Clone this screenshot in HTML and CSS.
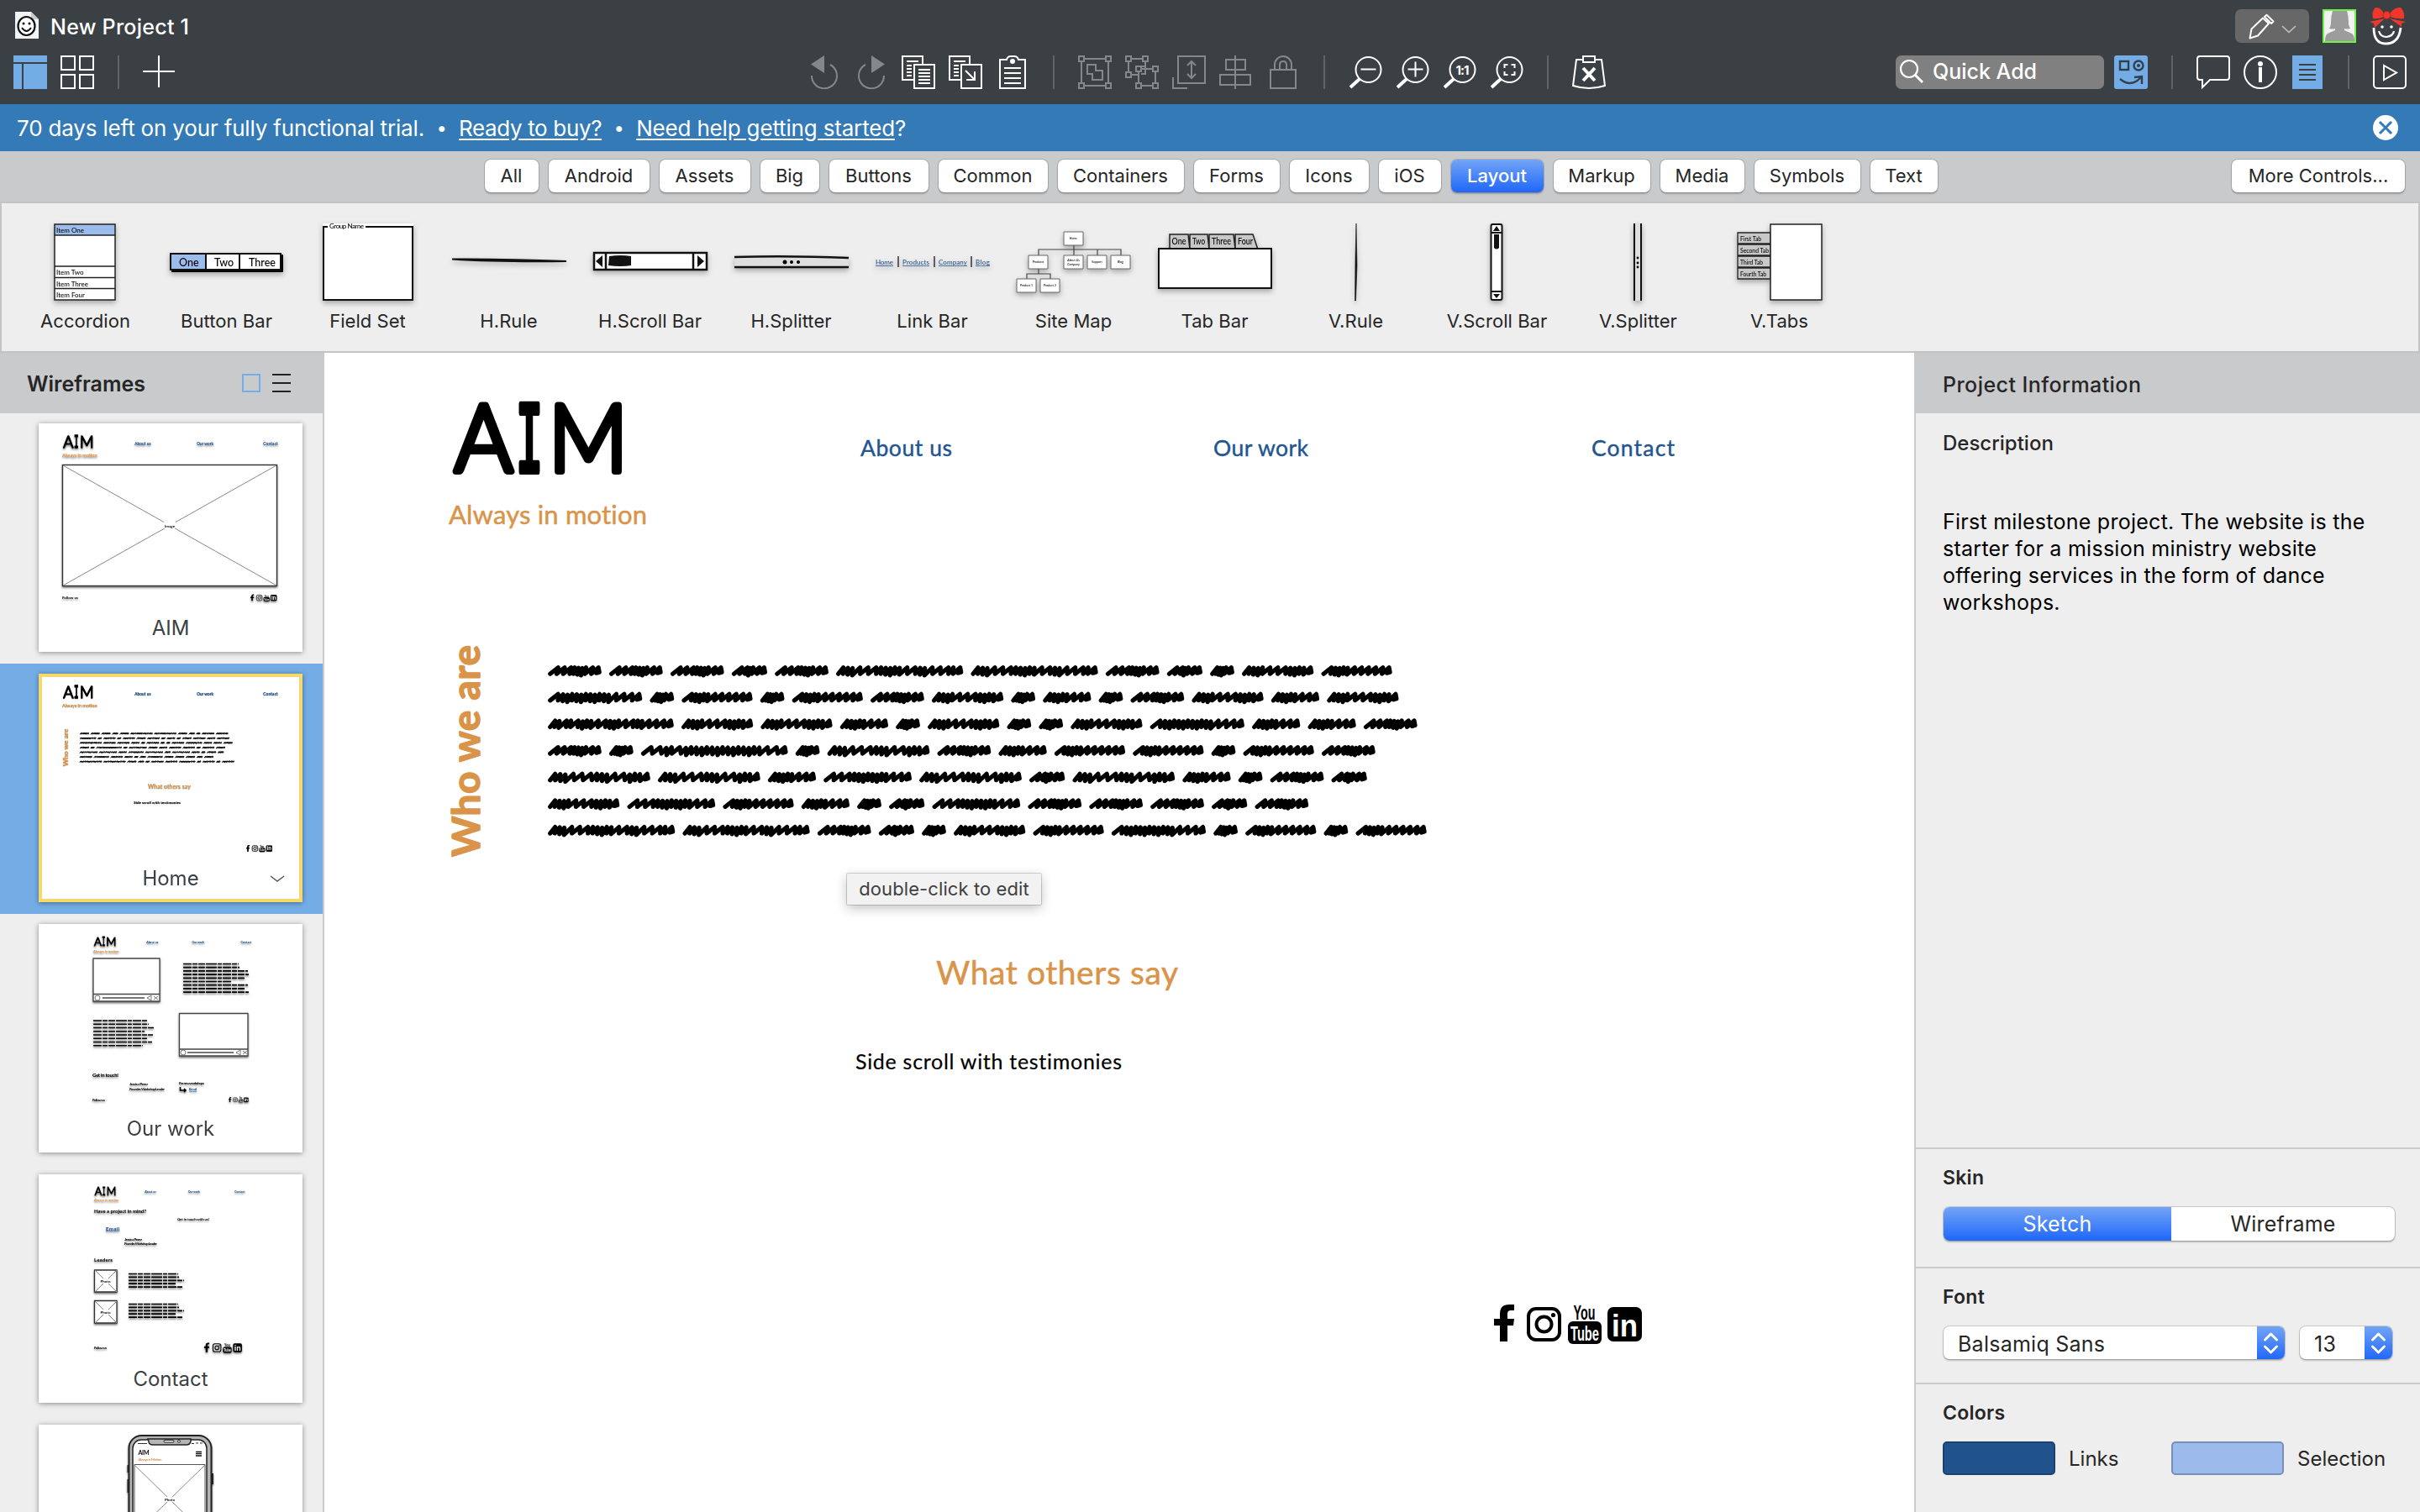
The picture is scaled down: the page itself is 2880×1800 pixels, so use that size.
FILE: index.html
```html
<!DOCTYPE html>
<html lang="en">
<head>
<meta charset="utf-8">
<title>New Project 1</title>
<link rel="stylesheet" href="styles.css">
</head>
<body>
<div class="app">

<header class="header">
  <div class="title-row">
    <svg class="doc-icon" width="28" height="32" viewBox="0 0 28 32"><path d="M0 0H19L28 9V32H0Z" fill="#f4f4f4"/><path d="M19 0V9H28Z" fill="#c9c9c9"/><ellipse cx="13.5" cy="17" rx="10" ry="11" fill="#fff" stroke="#111" stroke-width="2.2"/><circle cx="10" cy="14" r="1.5"/><circle cx="17" cy="14" r="1.5"/><path d="M8 19Q13.500 27 19 19" fill="none" stroke="#111" stroke-width="2"/></svg>
    <span class="project-name">New Project 1</span>
    <div class="account">
      <div class="mode-button">
        <svg width="88" height="40" viewBox="0 0 88 40" fill="none" stroke="#fff" stroke-width="2"><path d="M17.500 34.500L19.500 23.500L33 10.500L40 17L27 31.500Z M35 9L37.500 6.800L45.500 14.500L43 17Z" stroke-linejoin="round"/><path d="M56 20L64 27.500L72 20" stroke="#c4c4c4" stroke-width="1.500"/></svg>
      </div>
      <svg class="avatar" width="40" height="40" viewBox="0 0 40 40"><rect x="1" y="1" width="38" height="38" fill="#f1f1f1"/><path d="M12 2H29Q31 8 31 18Q32 21 33 23Q29 24 26 23V25L35 29Q38 31 38 38H3Q3 31 6 29L15 25V23Q12 24 8 23Q10 20 10 16Q10 8 12 2Z" fill="#9c9c9c"/><rect x="1" y="1" width="38" height="38" fill="none" stroke="#6ff24b" stroke-width="2"/></svg>
      <svg class="bow" width="44" height="46" viewBox="0 0 44 46"><path d="M5 25Q5 44 19 44Q35 44 37 25" fill="none" stroke="#fff" stroke-width="2.800"/><path d="M11 29Q13 36 20 36Q28 35 29 29" fill="none" stroke="#fff" stroke-width="2.200"/><circle cx="15" cy="24" r="1.800" fill="#fff"/><circle cx="26" cy="24" r="1.800" fill="#fff"/><path d="M17 8Q13 0 7 1Q2 6 4 14Q10 15 17 12ZM24 8Q30 0 37 1Q42 6 41 14Q34 15 24 12ZM18 14L0 18L5 20L6 25ZM24 14L43 18L38 20L38 24Z" fill="#f0372c"/><circle cx="20.500" cy="10" r="4.500" fill="#f0372c" stroke="#b3241c"/></svg>
    </div>
  </div>
  <div class="toolbar">
    <div class="tools">
      <svg class="icon" viewBox="0 0 40 40"><path d="M0 0H40V8H0ZM0 10H10V40H0ZM12 10H40V40H12Z" fill="#74ade6"/></svg>
      <svg class="icon line" viewBox="0 0 40 40"><path d="M1 1H17V17H1ZM23 1H39V17H23ZM1 23H17V39H1ZM23 23H39V39H23Z"/></svg>
      <i class="sep"></i>
      <svg class="icon line" viewBox="0 0 40 40"><path d="M19 0V38M0 19H38"/></svg>
    </div>
    <div class="tools center">
      <svg class="icon dim" viewBox="0 0 40 40"><path d="M4 10.500L20 0V21Z" class="solid"/><path d="M27 11A15 15 0 1 1 5 24"/></svg>
      <svg class="icon dim" viewBox="0 0 40 40"><path d="M36 10.500L20 0V21Z" class="solid"/><path d="M13 11A15 15 0 1 0 35 24"/></svg>
      <svg class="icon line" viewBox="0 0 40 40"><path d="M14 29H1V1H25V11M15 11H39V39H15ZM6 7H20M6 12H12M6 16H12M6 20H12M6 24H12M20 17H34M20 21H34M20 25H34M20 29H34M20 33H34"/></svg>
      <svg class="icon line" viewBox="0 0 40 40"><path d="M14 29H1V1H25V11M15 11H39V39H15ZM6 7H20M6 12H12M6 16H12M6 20H12M6 24H12M20 18L31 29M31 19V29H21"/></svg>
      <svg class="icon line" viewBox="0 0 40 40"><path d="M13 5H5V39H35V5H27Q26 1 22 1H18Q14 1 13 5ZM10 15H30M10 21H30M10 27H30M10 33H30"/><circle cx="20" cy="7" r="3" class="solid"/></svg>
      <i class="sep"></i>
      <svg class="icon dim" viewBox="0 0 40 40"><path d="M1 1H7V7H1ZM33 1H39V7H33ZM1 33H7V39H1ZM33 33H39V39H33ZM7 4H33M7 36H33M4 7V33M36 7V33M11 11H21V18H29V29H17V22H11Z"/></svg>
      <svg class="icon dim" viewBox="0 0 40 40"><path d="M1 1H7V7H1ZM21 1H27V7H21ZM1 20H7V26H1ZM13 13H19V19H13ZM33 13H39V19H33ZM13 33H19V39H13ZM33 33H39V39H33ZM7 4H21M4 7V20M24 7V13H19M7 23H16M19 16H33M16 19V33M36 19V33M19 36H33M24 13V22H19"/></svg>
      <svg class="icon dim" viewBox="0 0 40 40"><path d="M7 1H39V33H7ZM1 26V39H18M23 7V27M18 12L23 7L28 12M18 22L23 27L28 22"/></svg>
      <svg class="icon dim" viewBox="0 0 40 40"><path d="M19 0V40M8 5H31V17H8ZM1 23H37V35H1Z"/></svg>
      <svg class="icon dim" viewBox="0 0 40 40"><path d="M5 17H35V39H5ZM10 17V11A10 10 0 0 1 30 11V17M16 17V11Q16 7 20 7Q24 7 24 11V17"/></svg>
      <i class="sep"></i>
      <svg class="icon line" viewBox="0 0 40 40"><circle cx="23.500" cy="17" r="15"/><path d="M14.500 16.500H32.500"/><path d="M13 28L2 38" stroke-width="4"/></svg>
      <svg class="icon line" viewBox="0 0 40 40"><circle cx="23.500" cy="17" r="15"/><path d="M14.500 16.500H32.500M23.500 7.500V25.500"/><path d="M13 28L2 38" stroke-width="4"/></svg>
      <svg class="icon line" viewBox="0 0 40 40"><circle cx="23.500" cy="17" r="15"/><path d="M13 28L2 38" stroke-width="4"/><text x="23" y="22.500" class="zoom-text">1:1</text></svg>
      <svg class="icon line" viewBox="0 0 40 40"><circle cx="23.500" cy="17" r="15"/><path d="M13 28L2 38" stroke-width="4"/><path d="M17.500 15V11H21.500M25.500 11H29.500V15M29.500 19V23H25.500M21.500 23H17.500V19"/></svg>
      <i class="sep"></i>
      <svg class="icon line" viewBox="0 0 40 40"><path d="M13 5H5L1 36Q20 42 39 36L35 5H27M13 1H27V8H13Z"/><path d="M13 15L27 30M27 15L13 30" stroke-width="4"/></svg>
    </div>
    <div class="tools end">
      <div class="quick-add"><svg width="30" height="32" viewBox="0 0 30 32" fill="none" stroke="#fff" stroke-width="2.200"><circle cx="12" cy="13" r="10"/><path d="M19 20L28 29" stroke-width="3"/></svg><span>Quick Add</span></div>
      <svg class="icon" viewBox="0 0 40 40"><rect width="40" height="40" rx="3" fill="#74ade6"/><g fill="none" stroke="#31404f" stroke-width="2.400"><rect x="7" y="7" width="10" height="10"/><circle cx="29" cy="12" r="5.500"/><path d="M7 28Q20 39 32 26M24 26L33 25V34"/></g><circle cx="29" cy="12" r="2" fill="#31404f"/></svg>
      <i class="sep"></i>
      <svg class="icon line" viewBox="0 0 40 40"><path d="M4 1H36Q39 1 39 4V26Q39 29 36 29H16L7 38V29H4Q1 29 1 26V4Q1 1 4 1Z"/></svg>
      <svg class="icon line" viewBox="0 0 40 40"><circle cx="20" cy="20" r="19"/><circle cx="20" cy="10" r="3" class="solid"/><path d="M20 14V32" stroke-width="4"/></svg>
      <svg class="icon" viewBox="0 0 40 40"><path d="M2 0H38V40H2Z" fill="#74ade6"/><path d="M10 11H30M10 17H30M10 23H30M10 29H30" stroke="#3b4044" stroke-width="2"/></svg>
      <i class="sep"></i>
      <svg class="icon line" viewBox="0 0 40 40"><rect x="1" y="1" width="38" height="38" rx="4"/><path d="M13 12V29L28 20.500Z"/></svg>
    </div>
  </div>
</header>

<div class="trial">
  <span>70 days left on your fully functional trial.</span><b>•</b><u class="buy">Ready to buy?</u><b>•</b><span><u>Need help getting started</u>?</span>
  <svg class="close" width="30" height="30" viewBox="0 0 30 30"><circle cx="15" cy="15" r="15" fill="#fff"/><path d="M8 8L22 22M22 8L8 22" stroke="#337ab7" stroke-width="3"/></svg>
</div>

<nav class="categories">
  <div></div>
  <div class="category-list">
    <span class="btn">All</span><span class="btn">Android</span><span class="btn">Assets</span><span class="btn">Big</span><span class="btn">Buttons</span><span class="btn">Common</span><span class="btn">Containers</span><span class="btn">Forms</span><span class="btn">Icons</span><span class="btn">iOS</span><span class="btn active">Layout</span><span class="btn">Markup</span><span class="btn">Media</span><span class="btn">Symbols</span><span class="btn">Text</span>
  </div>
  <div class="more"><span class="btn">More Controls...</span></div>
</nav>

<section class="palette">
  <div class="control"><svg viewBox="0 0 168 92"><rect x="48" y="1" width="72" height="90" fill="#fff"/><rect x="48" y="1" width="72" height="13" fill="#9cbcec"/><path d="M48 1H120V91H48ZM48 14H120M48 51H120M48 64.500H120M48 77.500H120" class="sk"/><text x="50" y="11" class="t8">Item One</text><text x="50" y="61" class="t8">Item Two</text><text x="50" y="74.500" class="t8">Item Three</text><text x="50" y="88" class="t8">Item Four</text></svg><span>Accordion</span></div>
  <div class="control"><svg viewBox="0 0 168 92"><rect x="19" y="37" width="133" height="21" fill="#000"/><rect x="18" y="36" width="131" height="19" fill="#fff"/><rect x="18" y="36" width="42" height="19" fill="#9cbcec"/><path d="M18 36H149V55H18ZM60 36V55M100 36V55" class="sk w2"/><text x="28" y="50.500" class="t12">One</text><text x="70" y="50.500" class="t12">Two</text><text x="111" y="50.500" class="t12">Three</text></svg><span>Button Bar</span></div>
  <div class="control"><svg viewBox="0 0 168 92"><rect x="31" y="0" width="108" height="91" fill="#fff"/><path d="M37 4H32V91H138V4H82" class="sk w2"/><text x="39" y="6" class="t8" textLength="41">Group Name</text></svg><span>Field Set</span></div>
  <div class="control"><svg viewBox="0 0 168 92"><path d="M17 41.500Q80 41 153 44V46Q70 47 17 43.500Z" fill="#111"/></svg><span>H.Rule</span></div>
  <div class="control"><svg viewBox="0 0 168 92"><rect x="18" y="35" width="134" height="20" rx="2" fill="#fff"/><path d="M18 35H152V55H18ZM32 35V55M136 35V55" class="sk w3"/><path d="M28 38V52L20 45ZM141 38V52L149 45ZM36 39Q50 37 62 39V50Q50 52 35 50Z" fill="#111"/></svg><span>H.Scroll Bar</span></div>
  <div class="control"><svg viewBox="0 0 168 92"><rect x="17" y="40" width="136" height="12" fill="#dedede"/><path d="M17 40Q80 38 153 41M17 52H153" class="sk w3"/><circle cx="77" cy="46" r="2.500"/><circle cx="85" cy="46" r="2"/><circle cx="93" cy="46" r="2"/></svg><span>H.Splitter</span></div>
  <div class="control"><svg viewBox="0 0 168 92"><g class="t8 link"><text x="17" y="49" textLength="21">Home</text><text x="49" y="49" textLength="32">Products</text><text x="92" y="49" textLength="34">Company</text><text x="136" y="49" textLength="17">Blog</text></g><path d="M44 39V52M87 39V52M131 39V52" stroke="#333" stroke-width="1.500"/></svg><span>Link Bar</span></div>
  <div class="control"><svg viewBox="0 0 168 92"><path d="M85 25V36M43 42V31H141V42M85 31V42M113 31V42M43 54V60M29 66V60H57V66" fill="none" stroke="#444" stroke-width="1.200"/><path d="M73 10H96V26H73ZM31 38H54V54H31ZM73 38H96V54H73ZM101 38H124V54H101ZM129 38H152V54H129ZM17 66H40V82H17ZM45 66H68V82H45Z" fill="#fff" stroke="#666"/><g class="t4"><text x="84.500" y="19">Home</text><text x="42.500" y="47">Products</text><text x="84.500" y="45">About Us</text><text x="84.500" y="49.500">Company</text><text x="112.500" y="47">Support</text><text x="140.500" y="47">Blog</text><text x="28.500" y="75">Product 1</text><text x="56.500" y="75">Product 2</text></g></svg><span>Site Map</span></div>
  <div class="control"><svg viewBox="0 0 168 92"><path d="M31 31V13H53L55 31V13H76L78 31V13H107L109 31V13H130L136 31Z" fill="#c8c8c8" stroke="#222" stroke-width="1.500"/><rect x="18" y="30" width="134" height="47" fill="#fff" class="sk w2"/><g class="t11"><text x="33.500" y="25" textLength="17" lengthAdjust="spacingAndGlyphs">One</text><text x="58" y="25" textLength="15" lengthAdjust="spacingAndGlyphs">Two</text><text x="81" y="25" textLength="23" lengthAdjust="spacingAndGlyphs">Three</text><text x="112" y="25" textLength="18" lengthAdjust="spacingAndGlyphs">Four</text></g></svg><span>Tab Bar</span></div>
  <div class="control"><svg viewBox="0 0 168 92"><path d="M85 0L86 50L84.500 92H83.500L84 40Z" fill="#111" stroke="#111" stroke-width=".6"/></svg><span>V.Rule</span></div>
  <div class="control"><svg viewBox="0 0 168 92"><rect x="77.500" y="1" width="13" height="90" rx="2" fill="#fff" class="sk w2"/><path d="M77 11H91M77 81H91" class="sk w2"/><path d="M84 3L88 9H80ZM84 89L88 84H80ZM81 13H87V29Q84 32 81 29Z" fill="#111"/></svg><span>V.Scroll Bar</span></div>
  <div class="control"><svg viewBox="0 0 168 92"><rect x="80" y="0" width="8" height="92" fill="#dedede"/><path d="M80 0V92M88 0V92" class="sk w2"/><circle cx="84" cy="41" r="1.400"/><circle cx="84" cy="47" r="1.400"/><circle cx="84" cy="52" r="1.400"/></svg><span>V.Splitter</span></div>
  <div class="control"><svg viewBox="0 0 168 92"><path d="M35 11H74V24H35ZM35 25H74V38H35ZM35 39H74V52H35ZM35 53H74V66H35Z" fill="#c8c8c8" stroke="#222" stroke-width="1.300"/><rect x="74" y="1" width="61" height="90" fill="#fff" class="sk"/><g class="t8"><text x="38" y="20.500" textLength="25" lengthAdjust="spacingAndGlyphs">First Tab</text><text x="38" y="34.500" textLength="34" lengthAdjust="spacingAndGlyphs">Second Tab</text><text x="38" y="48.500" textLength="27" lengthAdjust="spacingAndGlyphs">Third Tab</text><text x="38" y="63" textLength="31" lengthAdjust="spacingAndGlyphs">Fourth Tab</text></g></svg><span>V.Tabs</span></div>
</section>

<main class="workspace">
  <aside class="navigator">
    <div class="panel-head"><span>Wireframes</span>
      <svg class="view" width="58" height="24" viewBox="0 0 58 24" fill="none"><rect x="1" y="2" width="20" height="20" stroke="#74ade6" stroke-width="2"/><path d="M36 2H58M36 12H58M36 22H58" stroke="#222" stroke-width="2"/></svg>
    </div>
    <div class="thumb-row"><div class="thumb">
      <svg viewBox="0 0 314 226" class="art"><g filter="url(#soft)">
        <use href="#site-head" class="bold" transform="translate(28 14.700) scale(.176) translate(-534 -478)"/>
        <rect x="28.500" y="49.500" width="255" height="144" fill="#fff" stroke="#333" stroke-width="1.400"/><path d="M29 50L283 193M283 50L29 193" stroke="#888"/><rect x="149" y="117" width="14" height="8" fill="#fff"/><text x="156" y="123.500" class="tiny mid">Image</text>
        <text x="28" y="209" class="tiny" textLength="19">Follow us</text>
        <use href="#social" transform="translate(252 203.500) scale(.178) translate(-1778 -1553)"/></g></svg>
      <span class="thumb-title">AIM</span></div></div>
    <div class="thumb-row selected"><div class="thumb">
      <svg viewBox="0 0 314 226" class="art"><use filter="url(#soft)" class="bold" href="#home-art" transform="translate(28 14.700) scale(.176) translate(-534 -478)"/></svg>
      <span class="thumb-title">Home</span>
      <svg class="chevron" width="18" height="10" viewBox="0 0 18 10"><path d="M1 2L9 8L17 2" fill="none" stroke="#555" stroke-width="1.500"/></svg></div></div>
    <div class="thumb-row"><div class="thumb">
      <svg viewBox="0 0 314 226" class="art"><g filter="url(#soft)">
        <use href="#site-head" class="bold" transform="translate(65 15) scale(.129) translate(-534 -478)"/>
        <path d="M65 41H144V92H65ZM65 83.500H144M167.500 106.500H249V157H167.500ZM167.500 149H249" fill="#fff" stroke="#444" stroke-width="1.300"/>
        <path d="M76 88H126M177 153H232" stroke="#777" stroke-width="2"/><circle cx="70" cy="88" r="3" class="outline"/><circle cx="172" cy="153" r="3" class="outline"/><path d="M129 88L134 85V91ZM137 86L142 90M142 86L137 90M235 153L240 150V156ZM243 151L248 155M248 151L243 155" class="outline"/>
        <path data-lines="172,47.500,4.200,66,67,77,78,73,57,77,73,78"/><path data-lines="65,115,4.250,65,66,72,61,71,65,70,59"/>
        <text x="64" y="181.500" class="tiny t7" textLength="31">Get in touch!</text><text x="108" y="192" class="tiny" textLength="22">Jessica Perez</text><text x="108" y="198" class="tiny" textLength="42">Founder, Workshop Leader</text><text x="167" y="191" class="tiny" textLength="30">For new workshops</text><text x="179" y="198" class="tiny link" textLength="9">Email</text><path d="M168.500 194V198H175M173 196L175 198L173 200" fill="none" stroke="#000" stroke-width="1.600"/>
        <text x="64" y="211" class="tiny" textLength="15">Follow us</text><use href="#social" transform="translate(226 206) scale(.134) translate(-1778 -1553)"/></g></svg>
      <span class="thumb-title">Our work</span></div></div>
    <div class="thumb-row"><div class="thumb">
      <svg viewBox="0 0 314 226" class="art"><g filter="url(#soft)">
        <use href="#site-head" class="bold" transform="translate(66 14.500) scale(.123) translate(-534 -478)"/>
        <text x="66" y="45.500" class="tiny t7" textLength="62">Have a project in mind?</text><text x="165" y="55" class="tiny" textLength="38">Get in touch with us!</text><text x="80" y="66.500" class="tiny t7 link" textLength="16">Email</text><text x="102" y="78.500" class="tiny" textLength="21">Jessica Perez</text><text x="102" y="84" class="tiny" textLength="39">Founder, Workshop Leader</text><text x="66" y="103.500" class="tiny t7" textLength="22">Leaders</text>
        <path d="M66.500 114H93V140H66.500ZM66.500 150.500H93V177H66.500Z" fill="#fff" stroke="#333" stroke-width="1.300"/><path d="M67 114L93 140M93 114L67 140M67 151L93 177M93 151L67 177" stroke="#888"/><path d="M75 124H84V130H75ZM75 161H84V167H75Z" fill="#fff"/><text x="79.500" y="129" class="tiny mid">Photo</text><text x="79.500" y="166" class="tiny mid">Photo</text>
        <path data-lines="107,118.500,3.900,59,60,66,56,65"/><path data-lines="107,154.500,3.900,59,60,66,56,65"/>
        <text x="66" y="208" class="tiny" textLength="15">Follow us</text><use href="#social" transform="translate(197 200.500) scale(.255) translate(-1778 -1553)"/></g></svg>
      <span class="thumb-title">Contact</span></div></div>
    <div class="thumb-row"><div class="thumb">
      <svg viewBox="0 0 314 226" class="art"><g filter="url(#soft)">
        <rect x="107.500" y="13" width="98" height="210" rx="15" fill="#b5b5b5" stroke="#222" stroke-width="2"/><rect x="112" y="18" width="88" height="200" rx="10" fill="#fff" stroke="#222" stroke-width="1.500"/><path d="M130 17H181V20Q180 24 176 24H136Q131 24 131 20Z" fill="#b5b5b5" stroke="#222" stroke-width="1.500"/><rect x="149" y="18.500" width="12" height="2.500" rx="1" fill="#fff" stroke="#222"/><circle cx="167" cy="19.800" r="1.500" fill="#fff" stroke="#222"/>
        <path d="M106.500 48V57M106.500 65V81M207 58V71" stroke="#222" stroke-width="2"/><path d="M118 22.500H129M182 22.500H185M187 22H190M192 22H195" stroke="#333" stroke-width="1.200"/>
        <text x="118.500" y="36" class="mini-logo" textLength="13">AIM</text><text x="118.500" y="42.500" class="tiny orange" textLength="28">Always in Motion</text><path d="M187 32.500H194M187 34.700H194M187 37H194" stroke="#111" stroke-width="1.300"/>
        <path d="M114 47.500H198V130H114Z" fill="#fff" stroke="#555"/><path d="M114 48L198 130M198 48L114 130" stroke="#888"/><rect x="150" y="86" width="12" height="6" fill="#fff"/><text x="156" y="91" class="tiny mid">Photo</text></g></svg>
    </div></div>
  </aside>

  <div class="canvas">
    <svg class="board" viewBox="386 420 1892 1380">
      <defs><filter id="soft" x="-5%" y="-5%" width="110%" height="115%"><feDropShadow dx="0" dy="1.500" stdDeviation="1.200" flood-color="#000" flood-opacity=".6"/></filter></defs>
      <g id="home-art" class="hand">
        <g id="site-head">
          <g class="logo"><text x="541" y="561" textLength="69" lengthAdjust="spacingAndGlyphs">A</text><text x="614" y="561" class="slab" textLength="32" lengthAdjust="spacingAndGlyphs">I</text><text x="653" y="561" textLength="94" lengthAdjust="spacingAndGlyphs">M</text></g>
          <text x="534" y="623.500" class="orange s30" textLength="236">Always in motion</text>
          <g class="navy s27"><text x="1024" y="542.500" textLength="109">About us</text><text x="1444" y="542.500" textLength="113">Our work</text><text x="1894" y="542.500" textLength="99">Contact</text></g>
        </g>
        <text transform="translate(571 1020) rotate(-90)" class="orange who" textLength="252">Who we are</text>
        <path id="scribble" class="scribble"/>
        <text x="1114" y="1171.500" class="orange s38" textLength="288">What others say</text>
        <text x="1018" y="1272.500" class="s25" textLength="317">Side scroll with testimonies</text>
        <g id="social">
          <path d="M1785 1597V1578H1778V1570H1785V1564Q1785 1553 1796 1553H1802V1560H1798Q1794 1560 1794 1564V1570H1802L1801 1578H1794V1597Z"/>
          <rect x="1819" y="1558" width="37" height="37" rx="9" fill="none" stroke="#000" stroke-width="4"/><circle cx="1837.500" cy="1576.500" r="9" fill="none" stroke="#000" stroke-width="4"/><circle cx="1848.500" cy="1565.500" r="2.600"/>
          <rect x="1866" y="1573" width="40" height="27" rx="6"/>
          <text x="1872.500" y="1571" class="yt" textLength="26" lengthAdjust="spacingAndGlyphs">You</text><text x="1869" y="1596" class="yt white" textLength="34" lengthAdjust="spacingAndGlyphs">Tube</text>
          <rect x="1913" y="1556" width="41" height="41" rx="7"/><text x="1918" y="1590.500" class="li" textLength="31" lengthAdjust="spacingAndGlyphs">in</text>
        </g>
      </g>
    </svg>
    <div class="tooltip">double-click to edit</div>
  </div>

  <aside class="inspector">
    <div class="panel-head">Project Information</div>
    <div class="description"><h4 class="medium">Description</h4><p>First milestone project. The website is the<br>starter for a mission ministry website<br>offering services in the form of dance<br>workshops.</p></div>
    <div class="group skin"><h4>Skin</h4><div class="segmented"><span class="on">Sketch</span><span>Wireframe</span></div></div>
    <div class="group font"><h4>Font</h4><div class="row"><div class="select"><span>Balsamiq Sans</span><svg viewBox="0 0 33 40"><path d="M9.500 16L16.500 9L23.500 16M9.500 24L16.500 31L23.500 24"/></svg></div><div class="select size"><span>13</span><svg viewBox="0 0 33 40"><path d="M9.500 16L16.500 9L23.500 16M9.500 24L16.500 31L23.500 24"/></svg></div></div></div>
    <div class="group colors"><h4>Colors</h4><div class="row"><i class="swatch links"></i><span class="links-label">Links</span><i class="swatch selection"></i><span>Selection</span></div></div>
  </aside>
</main>
</div>
<script src="script.js"></script>
</body>
</html>
```
FILE: styles.css
```css
* { box-sizing: border-box; }
body { margin: 0; background: #fff; font-family: Inter, "Liberation Sans", sans-serif; color: #262626; }
.app { width: 2880px; height: 1800px; overflow: hidden; display: flex; flex-direction: column; }
svg { display: block; flex: none; }

.header { height: 124px; flex: none; background: #3b4044; padding: 0 16px; }
.title-row { height: 62px; display: flex; align-items: center; color: #fff; }
.doc-icon { margin: 0 14px 3px 2px; }
.project-name { font-size: 25px; font-weight: 500; letter-spacing: .26px; padding-top: 1px; }
.account { margin-left: auto; display: flex; align-items: center; gap: 16px; height: 60px; }
.mode-button { width: 88px; height: 40px; border-radius: 7px; background: #676767; }
.toolbar { height: 48px; display: grid; grid-template-columns: 945px 950px 1fr; align-items: center; }
.tools { display: flex; gap: 16px; align-items: center; }
.end { justify-content: flex-end; }
.icon { width: 40px; height: 40px; }
.line, .dim { fill: none; stroke: #fff; stroke-width: 2; }
.line .solid { fill: #fff; stroke: none; }
.dim { stroke: #85888a; }
.dim .solid { fill: #85888a; stroke: none; }
.sep { width: 2px; height: 40px; margin: 0 12px; background: #606467; }
.zoom-text { font-size: 15px; font-weight: 700; fill: #fff; stroke: none; text-anchor: middle; letter-spacing: -1px; }
.quick-add { width: 248px; height: 40px; margin-right: -4px; border-radius: 7px; background: #808080; color: #fff; font-size: 25px; font-weight: 500; display: flex; align-items: center; gap: 10px; padding: 0 4px 2px; }

.trial { height: 56px; flex: none; background: #337ab7; color: #fff; font-size: 26px; letter-spacing: -.17px; padding: 0 26px 0 20px; display: flex; align-items: center; text-underline-offset: 3px; text-decoration-thickness: 2px; }
.trial b { width: 41px; text-align: center; font-weight: 400; font-size: 22px; }
.trial .buy { letter-spacing: -.35px; }
.close { margin-left: auto; }

.categories { height: 62px; flex: none; background: #c9cacc; border-bottom: 2px solid #c4c4c4; display: grid; grid-template-columns: 1fr auto 1fr; padding: 10px 18px 0 20px; }
.category-list { display: grid; gap: 12px; grid-template-columns: 64px 120px 108px 70px 118px 130px 150px 102px 94px 74px 110px 115px 100px 126px 80px; }
.btn { height: 39px; border-radius: 7px; background: #fff; box-shadow: 0 0 0 1px rgba(0,0,0,.14), 0 2px 2px rgba(0,0,0,.2); font-size: 22px; display: flex; align-items: center; justify-content: center; white-space: nowrap; padding-bottom: 1px; }
.btn.active { color: #fff; font-weight: 500; background: linear-gradient(#73a4f5, #1f67fa); }
.more { display: flex; justify-content: flex-end; }
.more .btn { width: 206px; }

.palette { height: 178px; flex: none; background: #eee; border: solid #c4c4c4; border-width: 0 2px 2px; display: flex; padding: 24px 15px 0; }
.control { width: 168px; display: flex; flex-direction: column; align-items: center; font-size: 22px; letter-spacing: .05px; }
.control svg { width: 168px; height: 92px; filter: drop-shadow(0 3px 3px rgba(0,0,0,.3)); overflow: visible; }
.control span { height: 28px; line-height: 28px; margin-top: 10px; padding-left: 1px; }
.sk { fill: none; stroke: #222; stroke-width: 1.500px; }
rect.sk { fill: #fff; }
.w2 { stroke-width: 2px; stroke: #111; }
.w3 { stroke-width: 2.500px; stroke: #111; }
.t8, .t11, .t12, .t4 { font-family: Lato, sans-serif; font-weight: 500; letter-spacing: 0; }
.t8 { font-size: 8px; }
.t11 { font-size: 11px; }
.t12 { font-size: 12.500px; }
.t4 { font-size: 3.500px; text-anchor: middle; }
.link { fill: #25568f; text-decoration: underline; }

.workspace { flex: 1; min-height: 0; display: grid; grid-template-columns: 386px 1892px 602px; }
.panel-head { height: 72px; background: #c9cacc; display: flex; align-items: center; }
.navigator { background: #eee; border-right: 2px solid #c9cacc; overflow: hidden; }
.navigator .panel-head { padding: 2px 38px 0 32px; font-size: 25px; font-weight: 600; justify-content: space-between; }
.view { margin-bottom: 3px; }
.thumb-row { height: 298px; padding: 12px 0 0 46px; }
.thumb-row.selected { background: #74ade6; }
.thumb { position: relative; width: 314px; height: 272px; background: #fff; box-shadow: 0 1px 6px rgba(0,0,0,.42); }
.selected .thumb { outline: 4px solid #f6d96b; outline-offset: -4px; }
.art { width: 314px; height: 226px; }
.thumb-title { display: block; height: 35px; line-height: 36px; text-align: center; font-size: 24px; color: #3b4044; }
.chevron { position: absolute; right: 21px; bottom: 23px; }
.tiny { font-family: Lato, sans-serif; font-size: 4.500px; font-weight: 700; }
.tiny.t7 { font-size: 6px; font-weight: 900; }
.mid { text-anchor: middle; }
.outline { fill: none; stroke: #555; stroke-width: .8px; }
.mini-logo { font: 700 7px Lato, sans-serif; }
[data-lines] { fill: none; stroke: #000; stroke-width: 1.700px; stroke-dasharray: 10 1 6 1 8 1 13 1 5 1; }
.bold { font-weight: 700; }

.canvas { position: relative; background: #fff; }
.board { width: 1892px; height: 1380px; }
.hand, #site-head { font-family: Lato, sans-serif; font-variant-ligatures: none; }
.logo { font-size: 110px; font-weight: 300; stroke: #000; stroke-width: 8px; stroke-linejoin: round; }
.slab { font-family: "Liberation Mono", monospace; font-size: 121px; }
.orange { fill: #d99449; }
.hand .orange { stroke: #d99449; stroke-width: .5px; stroke-linejoin: round; }
.navy { fill: #22558f; stroke: #22558f; stroke-width: .4px; }
.s25 { font-size: 25px; stroke: #000; stroke-width: .2px; }
.s27 { font-size: 26.500px; }
.s30 { font-size: 31px; }
.s38 { font-size: 39px; }
.hand .who { font-size: 46px; font-weight: 700; stroke-width: 1.500px; }
.scribble { fill: none; stroke: #000; stroke-width: 5.200px; stroke-linecap: round; stroke-linejoin: round; }
.yt { font: 700 24px "Liberation Sans", sans-serif; }
.white { fill: #fff; }
.li { font: 700 37px "Liberation Sans", sans-serif; fill: #fff; }
.tooltip { position: absolute; left: 622px; top: 620px; width: 231px; height: 37px; line-height: 36px; text-align: center; background: #f2f2f2; color: #404040; font-size: 22px; letter-spacing: .1px; box-shadow: 0 0 0 1px rgba(0,0,0,.16), 0 4px 14px rgba(0,0,0,.25); border-radius: 1px; }

.inspector { background: #eee; border-left: 2px solid #c9cacc; display: flex; flex-direction: column; }
.inspector .panel-head { padding: 4px 0 0 32px; font-size: 25px; font-weight: 500; letter-spacing: .44px; }
.inspector h4 { margin: 0; height: 28px; line-height: 28px; font-size: 23px; font-weight: 600; letter-spacing: .28px; }
.inspector h4.medium { font-size: 24px; font-weight: 500; letter-spacing: 0; }
.description { flex: 1; padding: 22px 33px 0 32px; }
.description p { margin: 63px 0 0; font-size: 25px; line-height: 32px; letter-spacing: .26px; color: #000; white-space: nowrap; }
.group { border-top: 2px solid #c9cacc; padding: 20px 30px 0 32px; font-size: 25px; display: flex; flex-direction: column; }
.skin { height: 142px; gap: 21px; }
.font { height: 138px; gap: 21px; }
.colors { height: 154px; gap: 20px; }
.segmented { width: 537px; height: 40px; margin-left: 1px; display: grid; grid-template-columns: 271px 1fr; background: #fff; border-radius: 7px; overflow: hidden; box-shadow: 0 0 0 1px rgba(0,0,0,.16), 0 2px 2px rgba(0,0,0,.2); }
.segmented span { display: flex; align-items: center; justify-content: center; letter-spacing: .2px; }
.segmented .on { color: #fff; background: linear-gradient(#73a4f5, #1f67fa); }
.row { display: flex; align-items: center; }
.font .row { margin-left: 1px; }
.select { width: 406px; height: 39px; margin-right: 18px; display: flex; justify-content: space-between; align-items: center; background: #fff; border-radius: 7px; overflow: hidden; box-shadow: 0 0 0 1px rgba(0,0,0,.16), 0 2px 2px rgba(0,0,0,.2); padding-left: 17px; letter-spacing: .25px; }
.select.size { width: 110px; margin: 0; }
.select span { padding-top: 3px; }
.select svg { width: 33px; height: 40px; background: linear-gradient(#73a4f5, #1f67fa); fill: none; stroke: #fff; stroke-width: 3px; stroke-linecap: round; stroke-linejoin: round; }
.colors .row { font-size: 24px; }
.swatch { width: 134px; height: 40px; border-radius: 5px; border: 2px solid; margin-right: 16px; }
.swatch.links { background: #20538c; border-color: #1a416f; }
.swatch.selection { background: #9cbaeb; border-color: #788fb6; }
.links-label { width: 122px; }
```
FILE: script.js
```js
// Each word is a zigzag; w is a wide stride, n a narrow one.
const words = {
  A: [64, "wwwnnnnw"], S: [42.5, "wwnnw"], T: [29, "nnnn"], X: [151.5, "nnnwwwnnnnnwwnnwwwn"],
  Y: [150, "nnwnwnnnwwnnnwwnnwww"], C: [85.5, "nnnnwwwnnnn"], D: [84.5, "wnnnnwwwww"],
  E: [112.5, "wnnnnnnnnnnnwww"], F: [57.5, "nnnnnww"], G: [175, "wwnnwnnnnnnnnnnnnnnnww"],
  H: [122, "nnnwwwnnnwwnnn"], J: [105, "wwwnnnnnnnnww"]
};
const lines = ["AAASAXXASTCD", "ETDTDACTFTACFC", "YCCFTCTTCEFFA", "ATGTHAFDDTDA", "HHFJHSHFTAS", "CJDFTSJAAASA", "XXASTCDETDTD"];

function drawWord(x, y, width, strides) {
  const steps = [...strides].map(s => (s === "w" ? 9.5 : 5.5));
  const scale = (width - 15) / steps.reduce((a, b) => a + b, 0);
  let px = x + 2.7;
  let d = `M${px} ${y + 3.5}`;
  steps.forEach((s, i) => {
    const drop = s < 6 ? (i % 3) * 0.9 : 0;
    const lean = s < 6 ? 6 : 9.5;
    d += `L${px + lean} ${y - 4 + drop / 2}L${px + s * scale} ${y + 3.4 + drop}`;
    px += s * scale;
  });
  return d + `L${px + 8.5} ${y - 4}L${px + 9.5} ${y + 1.5}L${px + 6} ${y + 2.5}`;
}

document.getElementById("scribble").setAttribute("d", lines.map((line, row) => {
  let x = 652;
  return [...line].map(key => {
    const [width, strides] = words[key];
    const d = drawWord(x, 798.7 + row * 31.65, width, strides);
    x += width + 8.9;
    return d;
  }).join("");
}).join(""));

// data-lines: x, y, line pitch, then one width per line.
document.querySelectorAll("[data-lines]").forEach(path => {
  const [x, y, pitch, ...widths] = path.dataset.lines.split(",").map(Number);
  path.setAttribute("d", widths.map((w, i) => `M${x} ${y + i * pitch}h${w}`).join(""));
});
```
